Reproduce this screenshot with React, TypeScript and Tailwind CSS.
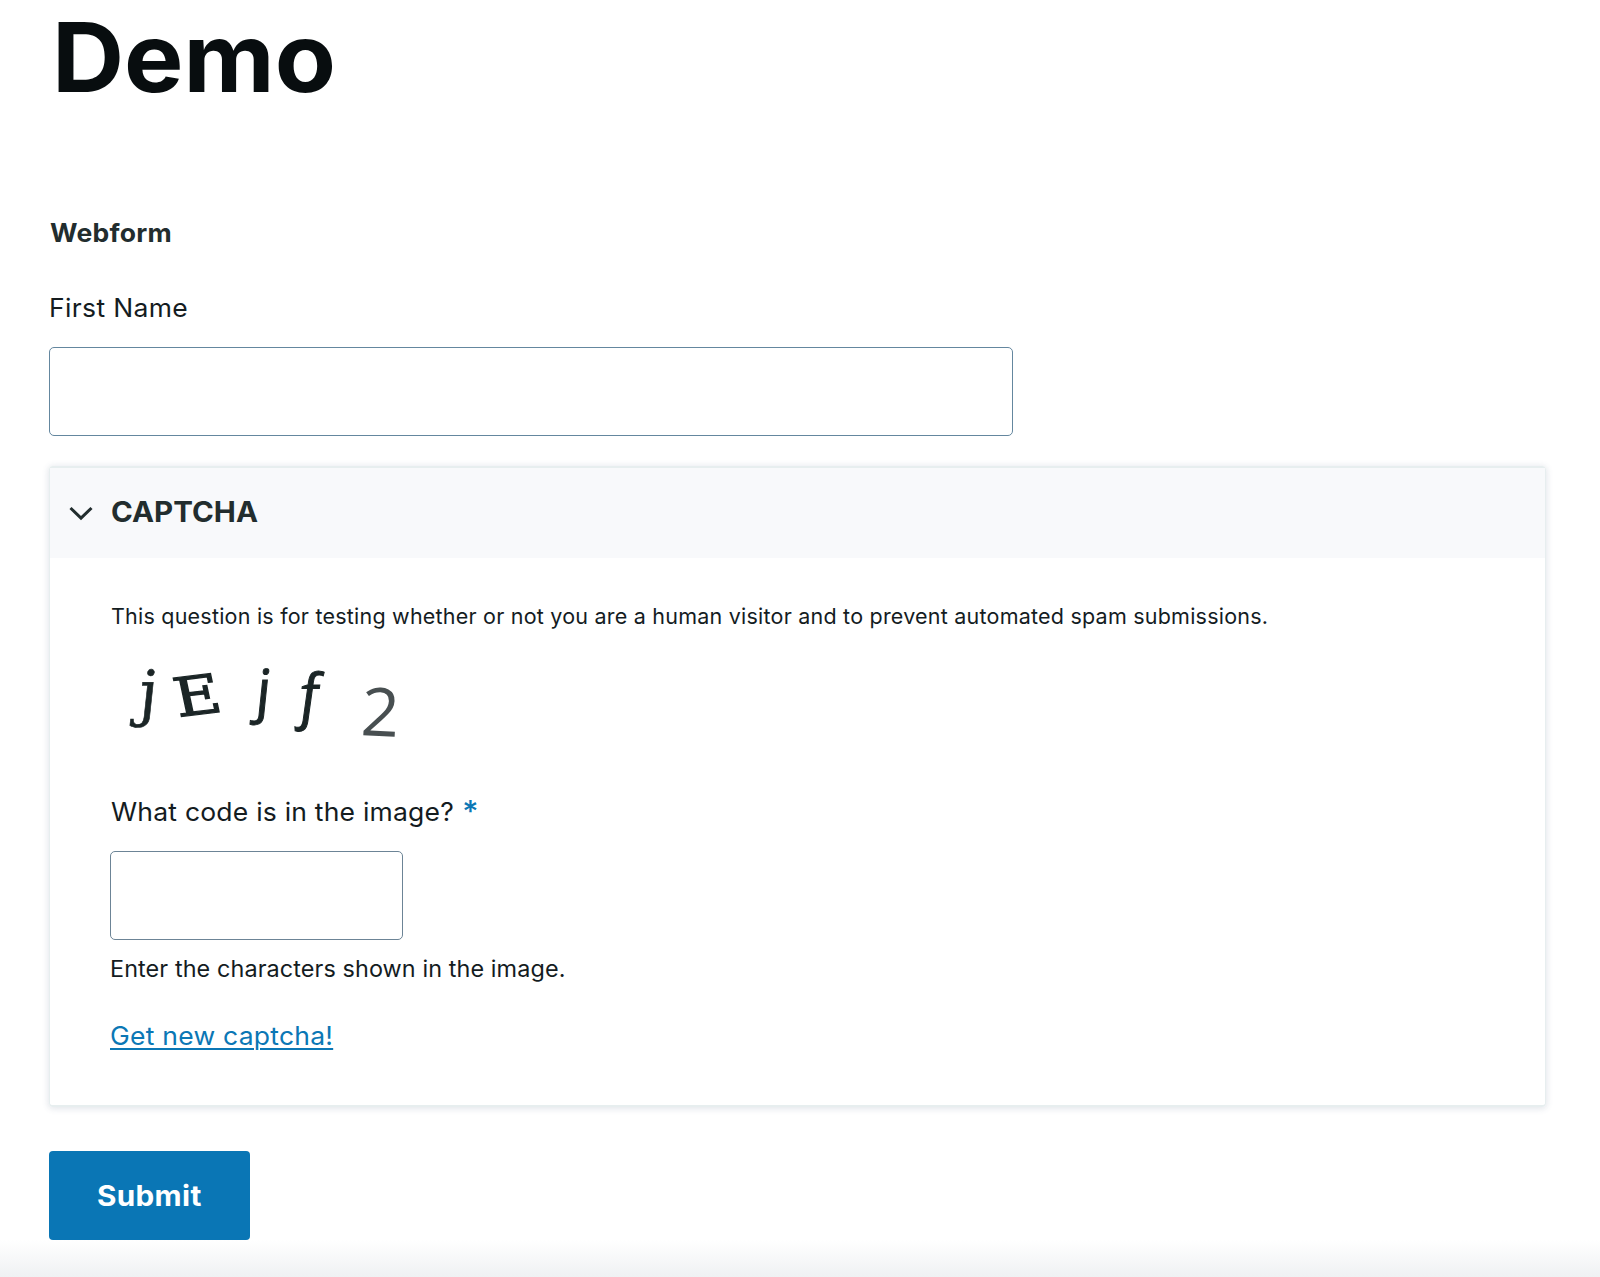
function CaptchaImage() {
  return (
    <svg width="330" height="110" viewBox="0 0 330 110" className="-ml-px block overflow-visible" role="img" aria-label="Captcha">
      <g fill="#1b2526" stroke="#1b2526">
        <text fontSize="61" fontStyle="italic" strokeWidth="0.6" fontFamily="DejaVu Serif, serif" transform="translate(30 64) skewX(5)">j</text>
        <text fontSize="54" strokeWidth="1.2" fontFamily="DejaVu Serif, serif" transform="translate(68 67) rotate(-7) skewX(5) scale(1.18 1)">E</text>
        <text fontSize="58" strokeWidth="1" fontFamily="Open Sans, sans-serif" transform="translate(144.5 61) skewX(-6)">j</text>
        <text fontSize="60" fontStyle="italic" strokeWidth="1" fontFamily="Open Sans, sans-serif" transform="translate(191 67) skewX(4)">f</text>
      </g>
      <text fontSize="67" fill="#484f51" fontFamily="Open Sans, sans-serif" transform="translate(250 85) rotate(3)">2</text>
    </svg>
  );
}

export default function App() {
  return (
    <main className="flex h-[1277px] flex-col items-start overflow-hidden bg-white pl-[49px] font-['Inter',sans-serif] text-[25.5px] leading-8 text-[#141c1f]">
      <h1 className="mt-[9px] ml-[3px] origin-left scale-x-104 text-[96px] leading-[96px] font-bold text-[#080d0f]">Demo</h1>
      <h2 className="mt-[112px] ml-px origin-left scale-x-104 font-bold tracking-[0.26px] text-[#222d2e]">Webform</h2>
      <label htmlFor="first" className="mt-[43px] origin-left scale-x-104 tracking-[0.32px]">First Name</label>
      <input id="first" className="mt-[23px] h-[89px] w-[964px] rounded-[5px] border-[1.5px] border-[#64879f] px-4 outline-none" />

      <section className="mt-[30px] flex h-[641px] w-[1497px] flex-col rounded-[4px] border-x border-y-2 border-[#e7eeef] shadow-[0_1px_6px_1px_rgba(60,80,110,0.14)]">
        <header className="flex h-[90px] shrink-0 items-center bg-[#f8f9fb] pl-[19px] text-[#222d2e]">
          <svg width="24" height="16" viewBox="0 0 24 16" fill="none" stroke="currentColor" strokeWidth="3">
            <path d="M1.5 3 12 13.2 22.5 3" />
          </svg>
          <span className="mb-[3px] ml-[18px] origin-left scale-x-[1.055] text-[28px] font-bold">CAPTCHA</span>
        </header>
        <div className="flex flex-col items-start pl-[61px]">
          <p className="mt-[42px] text-[21.5px] tracking-[0.22px] whitespace-nowrap">
            This question is for testing whether or not you are a human visitor and to prevent automated spam submissions.
          </p>
          <div className="mt-[18px] h-[100px]"><CaptchaImage /></div>
          <label htmlFor="code" className="mt-[46px] flex h-8 origin-left scale-x-104 gap-2 tracking-[0.2px]">
            What code is in the image? <span className="text-[30px] leading-[30px] font-medium text-[#0b77b5]">*</span>
          </label>
          <input id="code" className="mt-[23px] -ml-px h-[89px] w-[293px] rounded-[5px] border-[1.5px] border-[#6c8496] px-4 outline-none" />
          <p className="mt-[13px] -ml-px origin-left scale-x-104 text-[22.5px] tracking-[0.09px]">Enter the characters shown in the image.</p>
          <a href="#" className="mt-[35px] -ml-px origin-left scale-x-104 tracking-[0.22px] text-[#0b77b5] underline decoration-2 underline-offset-[3px]">Get new captcha!</a>
        </div>
      </section>

      <button className="mt-[44px] h-[89px] w-[201px] rounded-[4px] bg-[#0a76b5] text-[28px] font-bold text-white">
        <span className="inline-block scale-x-106 tracking-[0.3px]">Submit</span>
      </button>
      <div className="mt-auto -ml-[49px] h-[37px] w-[1600px] shrink-0 bg-linear-to-b from-white to-[#eff1f3]" />
    </main>
  );
}
